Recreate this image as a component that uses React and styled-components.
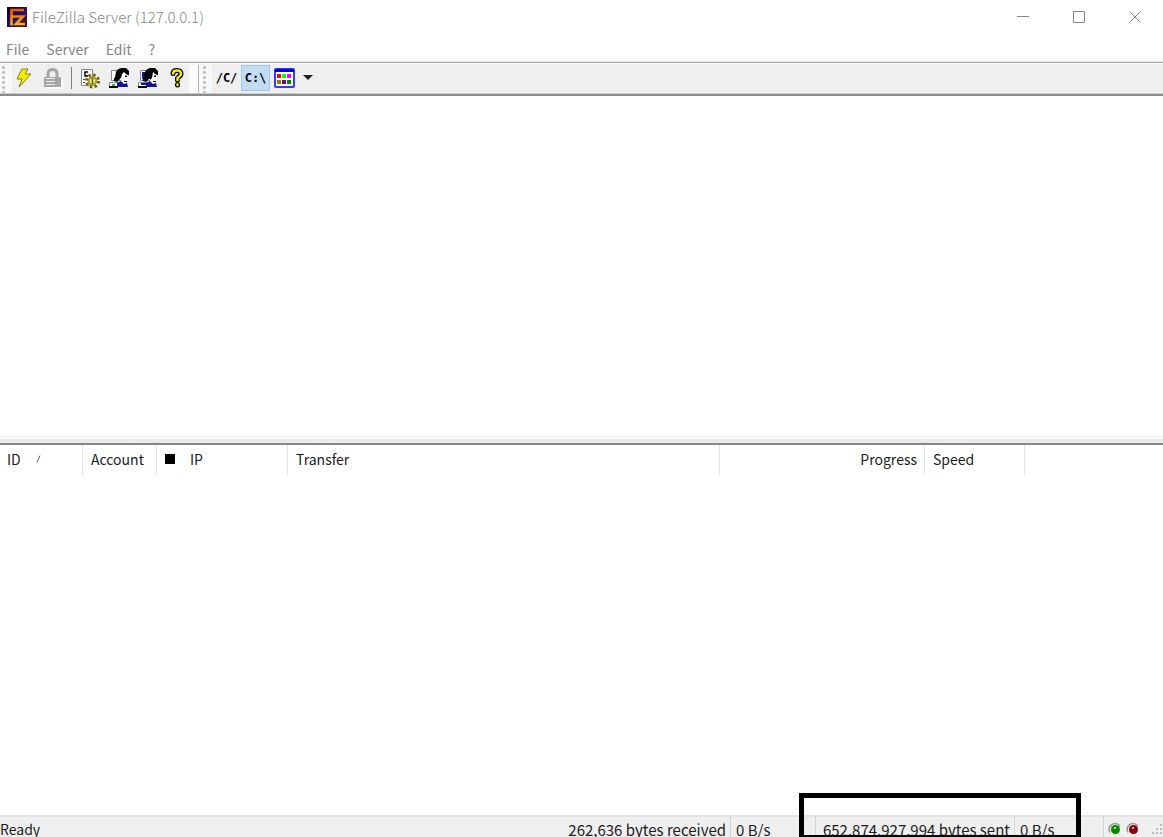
import React from 'react';
import styled, {createGlobalStyle} from 'styled-components';

const GlobalStyle = createGlobalStyle`
  * {
    box-sizing: border-box;
  }

  body {
    margin: 0;
    overflow: hidden;
    background: #fff;
    color: #1c1c1c;
    font: 14px/20px "Noto Sans CJK KR", "Noto Sans", sans-serif;
  }

  button {
    padding: 0;
    border: 0;
    background: none;
    color: inherit;
    font: inherit;
  }

  svg {
    display: block;
  }
`

const Window = styled.div`
  display: flex;
  flex-direction: column;
  height: 100vh;
  overflow: hidden;
`

const TitleBar = styled.header`
  display: flex;
  align-items: center;
  flex: none;
  height: 34px;
  padding-left: 7px;
  gap: 5px;
`

const Title = styled.h1`
  flex: 1;
  margin: 0;
  color: #868686;
  font-size: 15px;
  font-weight: 300;
`

const CaptionButtons = styled.div`
  display: flex;
`

const CaptionButton = styled.button`
  display: flex;
  align-items: center;
  justify-content: center;
  width: 56px;
  height: 34px;
`

const MenuBar = styled.nav`
  display: flex;
  flex: none;
  height: 28px;
  padding: 5px 6px 3px;
  gap: 17px;
  color: #858585;
`

const ToolBar = styled.div`
  display: flex;
  flex: none;
  height: 34px;
  border-top: 1px solid #a6a6a6;
  border-bottom: 2px solid #8b8b8b;
  background: #efefef;
  box-shadow: inset 0 1px #fafafa, inset 0 -1px #cacaca, 0 -1px #e9e9e9;
`

const Grip = styled.div`
  width: ${({$divided}) => ($divided ? 14 : 12)}px;
  margin: 2px 0 1px;
  border-left: ${({$divided}) => ($divided ? '1px solid #b4b4b4' : '0')};
  background: radial-gradient(circle, #bdbdbd 1px, transparent 2px) ${({$divided}) => ($divided ? 3 : 1)}px 0 / 5px 5px repeat-y #f8f8f8;
`

const ToolGroup = styled.div`
  display: flex;
  align-items: center;
  padding-bottom: 2px;
  gap: ${({$gap}) => $gap}px;
`

const Separator = styled.span`
  width: 1px;
  height: 22px;
  margin: 0 6px 0 1px;
  background: #7d7d7d;
`

const ToolSpacer = styled.div`
  width: 9px;
  margin: 2px 0 1px;
  background: #fcfcfc;
`

const ToolButton = styled.button`
  display: flex;
  align-items: center;
  justify-content: center;
  width: ${({$width}) => $width || 24}px;
  height: 26px;
  border: 1px solid ${({$active}) => ($active ? '#98c9f0' : 'transparent')};
  background: ${({$active}) => ($active ? '#c2dcf3' : 'transparent')};
  color: #000;
  font: bold 12px/20px "DejaVu Sans Mono", monospace;
`

const LogPane = styled.main`
  flex: 340 1 0;
`

const Splitter = styled.div`
  flex: none;
  height: 9px;
  border-top: 1px solid #f2f2f2;
  border-bottom: 2px solid #868686;
  background: linear-gradient(#fbfbfb 2px, #ebebeb 2px);
`

const TransferPane = styled.section`
  flex: 370 1 0;
  overflow: hidden;
`

const TransferTable = styled.table`
  width: 100%;
  border-collapse: separate;
  border-spacing: 0;
  table-layout: fixed;
`

const HeadCell = styled.th`
  width: ${({$width}) => ($width ? `${$width}px` : 'auto')};
  height: 30px;
  padding: 0 7px 2px 8px;
  border-right: ${({$width}) => ($width ? '1px solid #e4e4e4' : '0')};
  font-weight: 400;
  text-align: ${({$align}) => $align || 'left'};
  white-space: nowrap;

  &:first-child {
    padding-left: 7px;
  }
`

const HeadLabel = styled.span`
  display: flex;
  align-items: center;
  gap: 15px;
`

const StatusBar = styled.footer`
  display: flex;
  flex: none;
  height: 22px;
  border-top: 2px solid #e3e3e3;
  background: #efefef;
  font-size: 15px;
  line-height: 25px;
  white-space: nowrap;
`

const StatusField = styled.div`
  width: ${({$width}) => ($width ? `${$width}px` : 'auto')};
  flex: ${({$width}) => ($width ? 'none' : '1')};
  padding: 0 4px 0 ${({$width}) => ($width ? 5 : 0)}px;
  border-right: 1px solid #d2d2d2;
  text-align: ${({$align}) => $align || 'left'};
`

const ReadyField = styled(StatusField)`
  border-right: 0;
  font-size: 14px;
`

const SentFields = styled.div`
  position: relative;
  display: flex;
`

const Outline = styled.div`
  position: absolute;
  inset: -24px 23px 0 -17px;
  border: 5px solid #000;
  border-bottom-width: 2px;
`

const Lights = styled.div`
  display: flex;
  width: 59px;
  padding: 5px 0 0 4px;
  gap: 4px;

  svg:last-child {
    margin-left: auto;
  }
`

const AppLogo = () => (
    <svg width="20" height="20" viewBox="0 0 20 20" aria-hidden="true">
        <defs>
            <linearGradient id="logoBack" x2="1" y2="1">
                <stop offset="0" stopColor="#080018"/>
                <stop offset="0.5" stopColor="#1e1470"/>
                <stop offset="1" stopColor="#5c0c10"/>
            </linearGradient>
            <linearGradient id="logoMark" x1="0" y1="0" x2="0" y2="20" gradientUnits="userSpaceOnUse">
                <stop offset="0" stopColor="#f04800"/>
                <stop offset="1" stopColor="#ffc21c"/>
            </linearGradient>
        </defs>
        <path fill="url(#logoBack)" d="M0 0h20v20H0z"/>
        <path fill="none" stroke="url(#logoMark)" strokeWidth="2.600" d="M4.500 18.500V3H17M5 9.500h11L9 17h9"/>
    </svg>
)

const BoltIcon = () => (
    <svg width="18" height="22" viewBox="0 0 18 22" aria-hidden="true">
        <path fill="#f5f000" stroke="#858000" d="M7 2h6l-3 5h6L4 20l3-8H2z"/>
    </svg>
)

const LockIcon = () => (
    <svg width="20" height="22" viewBox="0 0 20 22" aria-hidden="true">
        <path fill="none" stroke="#fff" strokeWidth="2" d="M3 20.500h16V11"/>
        <path fill="none" stroke="#a5a5a5" strokeWidth="3" d="M5 11V7q0-4.500 4.500-4.500T14 7v4"/>
        <rect x="1" y="10" width="17" height="10" rx="1" fill="#a5a5a5"/>
        <path stroke="#eee" d="M3 11.500h9M3 14.500h9M3 17.500h9"/>
    </svg>
)

const SettingsIcon = () => (
    <svg width="20" height="22" viewBox="0 0 20 22" aria-hidden="true">
        <path fill="#fff" stroke="#888" d="M1.500 2.500h11v16h-11z"/>
        <path fill="none" stroke="#000" strokeWidth="1.500" d="M8 5H5v4h3"/>
        <path stroke="#444" d="M3 12.500h2M3 15.500h2"/>
        <circle cx="12.500" cy="14" r="6" fill="none" stroke="#66611c" strokeWidth="3" strokeDasharray="2.400 2.300"/>
        <circle cx="12.500" cy="14" r="3.800" fill="#f2ee80" stroke="#a39d18" strokeWidth="2"/>
        <path stroke="#5a5610" strokeWidth="1.500" d="M12.500 11v6"/>
    </svg>
)

const UserIcon = ({group}) => (
    <svg width="20" height="22" viewBox="0 0 20 22" aria-hidden="true">
        <path fill="#fff" stroke="#888" d="M2.500 3.500h10v10h-10zM.5 15.500h13v4H.5z"/>
        {group && <path fill="#1010a8" d="M4 5h8v7H4z"/>}
        <path fill={group ? '#1010a8' : '#18c848'} d={group ? 'M3 16h7v2H3z' : 'M3 17h3v2H3z'}/>
        <path fill="#000" d="M7 5q1-3 5-4h5l3 3v4l-2 1-4-2-3 5-3 3-3-1q-1-2 1-4z"/>
        <path fill="#fff" d="m13 7 2-2 2 2 2 1v5l-2 2v2h-3l-2-4z"/>
        <path fill="#000" d="M16 8.500h2v1.500h-2zM15 14h3v1h-3z"/>
        {group && <path fill="#000" d="m13 1 2 4-1 6-2 2V5z"/>}
        <path fill="#101098" d="m8 16 4-2 3 3 3-1 1 4H8z"/>
        <path fill="#000" d="M0 19h9v2H0z"/>
    </svg>
)

const HelpIcon = () => (
    <svg width="16" height="22" viewBox="0 0 16 22" aria-hidden="true">
        <g fill="none" strokeLinecap="round" strokeLinejoin="round">
            <path stroke="#000" strokeWidth="5" d="M4 6.500Q4 3.500 8 3.500t4 3.500Q12 8.500 8.500 11v2M8.500 17.500v.5"/>
            <path stroke="#f8ec00" strokeWidth="2.500" d="M4 6.500Q4 3.500 8 3.500t4 3.500Q12 8.500 8.500 11v2M8.500 17.500v.5"/>
        </g>
    </svg>
)

const PaletteIcon = () => (
    <svg width="21" height="20" viewBox="0 0 21 20" aria-hidden="true">
        <rect x="1" y="1" width="19" height="18" rx="1" fill="#fff" stroke="#3838ff" strokeWidth="2"/>
        <path fill="#0000d8" d="M1 1h19v3H1z"/>
        <path fill="#f00" d="M3 6h4v4H3z"/>
        <path fill="#0f0" d="M8 6h4v4H8z"/>
        <path fill="#f0f" d="M13 6h4v4h-4z"/>
        <path fill="#888500" d="M3 12h4v4H3z"/>
        <path fill="#850085" d="M8 12h4v4H8z"/>
        <path fill="#008500" d="M13 12h4v4h-4z"/>
    </svg>
)

const Led = ({color, label}) => (
    <svg width="14" height="14" viewBox="0 0 14 14" role="img" aria-label={label}>
        <path fill="none" stroke="#999" strokeWidth="1.500" d="M2 10.500Q-.5 5 4 2.500T12 4"/>
        <circle cx="7.500" cy="7.500" r="4.500" fill={color}/>
        <path stroke="#fff" strokeOpacity=".8" strokeWidth="1.500" d="m6 6.500 2-1"/>
    </svg>
)

const SizeGrip = () => (
    <svg width="12" height="14" viewBox="2 0 12 14" aria-hidden="true">
        <path fill="#bcbcbc" d="M11 2h2v2h-2zM7 6h2v2H7zM11 6h2v2h-2zM3 10h2v2H3zM7 10h2v2H7zM11 10h2v2h-2z"/>
    </svg>
)

const captions = [
    {label: 'Minimize', path: 'M0 5.500h12'},
    {label: 'Maximize', path: 'M.5.5h11v11H.5z'},
    {label: 'Close', path: 'm.5.5 11 11m0-11-11 11'},
]

const menus = ['File', 'Server', 'Edit', '?']

const App = () => {
    return (
        <Window>
            <GlobalStyle/>
            <TitleBar>
                <AppLogo/>
                <Title>FileZilla Server (127.0.0.1)</Title>
                <CaptionButtons>
                    {captions.map(({label, path}) => (
                        <CaptionButton key={label} aria-label={label}>
                            <svg width="12" height="12" fill="none" stroke="#888"><path d={path}/></svg>
                        </CaptionButton>
                    ))}
                </CaptionButtons>
            </TitleBar>
            <MenuBar>
                {menus.map((menu) => <button key={menu}>{menu}</button>)}
            </MenuBar>
            <ToolBar>
                <Grip/>
                <ToolGroup $gap={5}>
                    <ToolButton aria-label="Server online"><BoltIcon/></ToolButton>
                    <ToolButton aria-label="Lock server"><LockIcon/></ToolButton>
                    <Separator/>
                </ToolGroup>
                <ToolGroup $gap={5}>
                    <ToolButton aria-label="Settings"><SettingsIcon/></ToolButton>
                    <ToolButton aria-label="Users"><UserIcon/></ToolButton>
                    <ToolButton aria-label="Groups"><UserIcon group/></ToolButton>
                    <ToolButton aria-label="Help"><HelpIcon/></ToolButton>
                </ToolGroup>
                <ToolSpacer/>
                <Grip $divided/>
                <ToolGroup $gap={0}>
                    <ToolButton $width={29}>/C/</ToolButton>
                    <ToolButton $width={29} $active>C:\</ToolButton>
                    <ToolButton $width={29} aria-label="Display"><PaletteIcon/></ToolButton>
                    <ToolButton $width={18} aria-label="Display options">
                        <svg width="10" height="5"><path fill="#222" d="M0 0h10L5 5z"/></svg>
                    </ToolButton>
                </ToolGroup>
            </ToolBar>
            <LogPane/>
            <Splitter/>
            <TransferPane>
                <TransferTable>
                    <thead>
                        <tr>
                            <HeadCell $width={83}>
                                <HeadLabel>
                                    ID
                                    <svg width="6" height="8" stroke="#666"><path d="M1 7.500 4 .5"/></svg>
                                </HeadLabel>
                            </HeadCell>
                            <HeadCell $width={74}>Account</HeadCell>
                            <HeadCell $width={131}>
                                <HeadLabel>
                                    <svg width="10" height="10"><path d="M0 0h10v10H0z"/></svg>
                                    IP
                                </HeadLabel>
                            </HeadCell>
                            <HeadCell $width={432}>Transfer</HeadCell>
                            <HeadCell $width={205} $align="right">Progress</HeadCell>
                            <HeadCell $width={100}>Speed</HeadCell>
                            <HeadCell/>
                        </tr>
                    </thead>
                </TransferTable>
            </TransferPane>
            <StatusBar>
                <ReadyField>Ready</ReadyField>
                <StatusField $width={170} $align="right">262,636 bytes received</StatusField>
                <StatusField $width={85}>0 B/s</StatusField>
                <SentFields>
                    <StatusField $width={199} $align="right">652,874,927,994 bytes sent</StatusField>
                    <StatusField $width={89}>0 B/s</StatusField>
                    <Outline/>
                </SentFields>
                <Lights>
                    <Led color="#008a00" label="Receiving"/>
                    <Led color="#8a0000" label="Sending"/>
                    <SizeGrip/>
                </Lights>
            </StatusBar>
        </Window>
    );
};

export default App;
